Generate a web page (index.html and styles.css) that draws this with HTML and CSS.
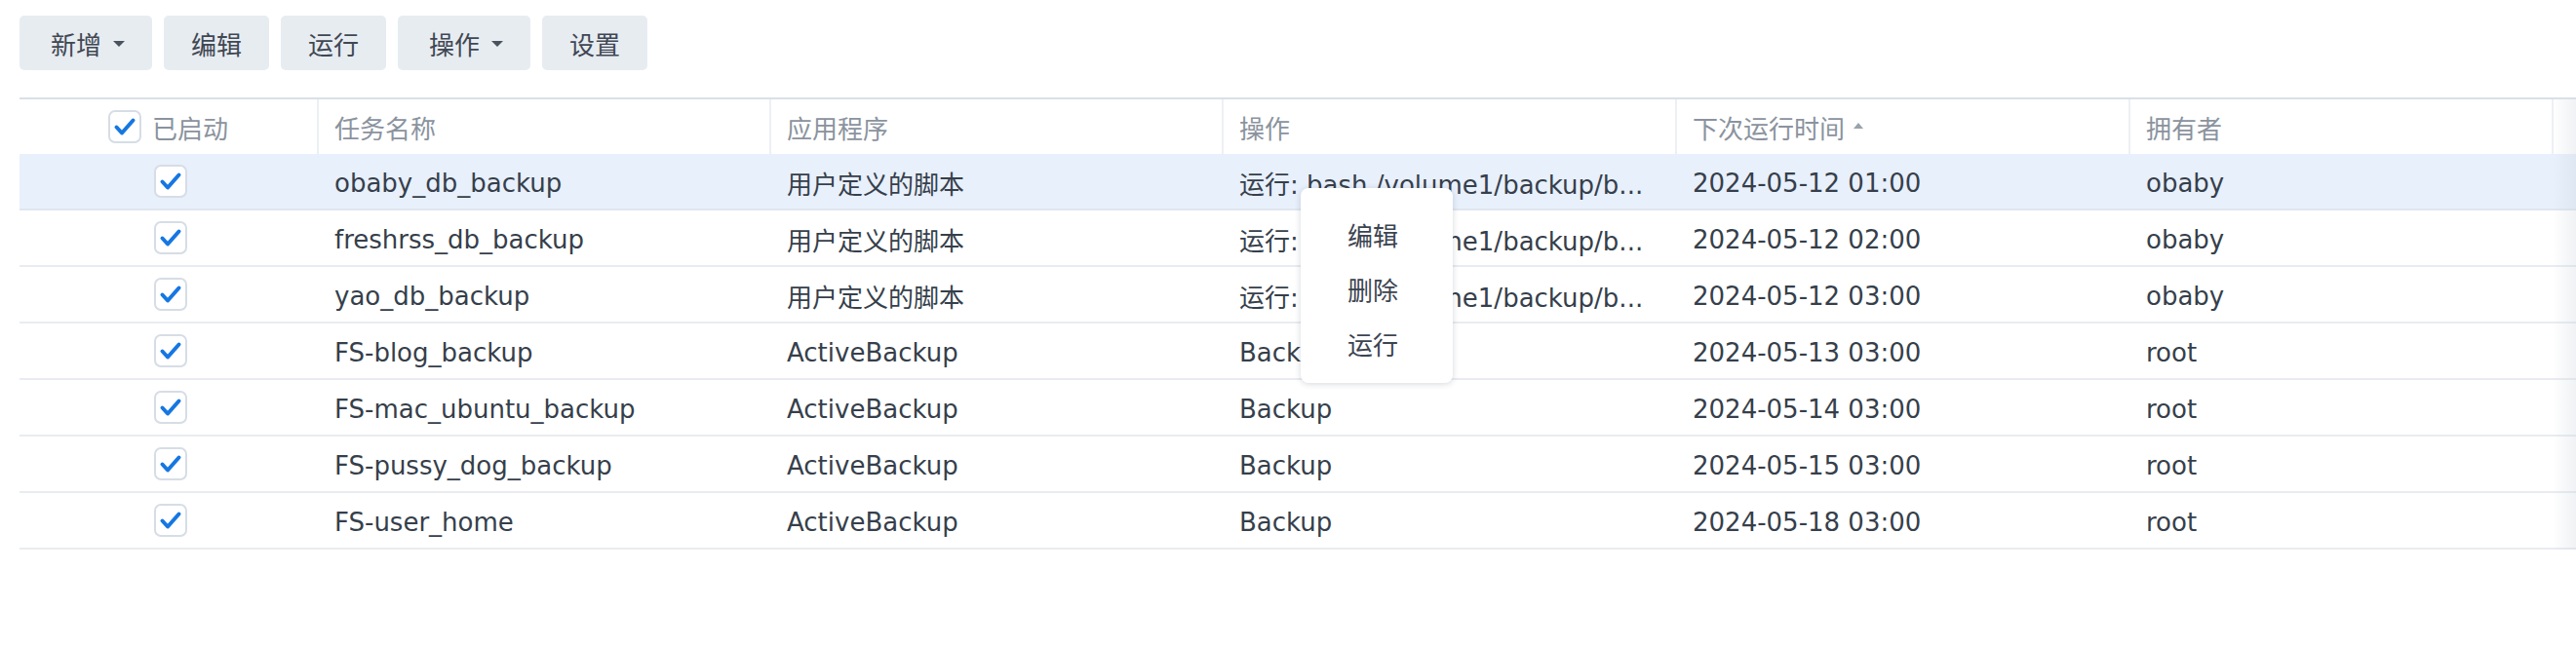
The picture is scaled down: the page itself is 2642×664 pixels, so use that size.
FILE: index.html
```html
<!DOCTYPE html>
<html lang="zh-CN">
<head>
<meta charset="utf-8">
<title>任务计划</title>
<link rel="stylesheet" href="styles.css">
</head>
<body>
<div class="page">
  <div class="toolbar">
    <button class="btn btn-wide">新增<span class="caret"></span></button>
    <button class="btn">编辑</button>
    <button class="btn">运行</button>
    <button class="btn btn-wide">操作<span class="caret"></span></button>
    <button class="btn">设置</button>
  </div>

  <div class="grid">
    <div class="row head">
      <div class="cell c-check"><span class="cb"><svg viewBox="0 0 34 34"><path d="M8.5 17.5 L14 23.5 L25.5 10.5"/></svg></span><span class="head-label">已启动</span></div>
      <div class="cell">任务名称</div>
      <div class="cell">应用程序</div>
      <div class="cell">操作</div>
      <div class="cell">下次运行时间<span class="sort"></span></div>
      <div class="cell">拥有者</div>
      <div class="cell last"></div>
    </div>

    <div class="row sel">
      <div class="cell c-check"><span class="cb"><svg viewBox="0 0 34 34"><path d="M8.5 17.5 L14 23.5 L25.5 10.5"/></svg></span></div>
      <div class="cell">obaby_db_backup</div>
      <div class="cell">用户定义的脚本</div>
      <div class="cell">运行: bash /volume1/backup/b...</div>
      <div class="cell">2024-05-12 01:00</div>
      <div class="cell">obaby</div>
      <div class="cell last"></div>
    </div>
    <div class="row">
      <div class="cell c-check"><span class="cb"><svg viewBox="0 0 34 34"><path d="M8.5 17.5 L14 23.5 L25.5 10.5"/></svg></span></div>
      <div class="cell">freshrss_db_backup</div>
      <div class="cell">用户定义的脚本</div>
      <div class="cell">运行: bash /volume1/backup/b...</div>
      <div class="cell">2024-05-12 02:00</div>
      <div class="cell">obaby</div>
      <div class="cell last"></div>
    </div>
    <div class="row">
      <div class="cell c-check"><span class="cb"><svg viewBox="0 0 34 34"><path d="M8.5 17.5 L14 23.5 L25.5 10.5"/></svg></span></div>
      <div class="cell">yao_db_backup</div>
      <div class="cell">用户定义的脚本</div>
      <div class="cell">运行: bash /volume1/backup/b...</div>
      <div class="cell">2024-05-12 03:00</div>
      <div class="cell">obaby</div>
      <div class="cell last"></div>
    </div>
    <div class="row">
      <div class="cell c-check"><span class="cb"><svg viewBox="0 0 34 34"><path d="M8.5 17.5 L14 23.5 L25.5 10.5"/></svg></span></div>
      <div class="cell">FS-blog_backup</div>
      <div class="cell">ActiveBackup</div>
      <div class="cell">Backup</div>
      <div class="cell">2024-05-13 03:00</div>
      <div class="cell">root</div>
      <div class="cell last"></div>
    </div>
    <div class="row">
      <div class="cell c-check"><span class="cb"><svg viewBox="0 0 34 34"><path d="M8.5 17.5 L14 23.5 L25.5 10.5"/></svg></span></div>
      <div class="cell">FS-mac_ubuntu_backup</div>
      <div class="cell">ActiveBackup</div>
      <div class="cell">Backup</div>
      <div class="cell">2024-05-14 03:00</div>
      <div class="cell">root</div>
      <div class="cell last"></div>
    </div>
    <div class="row">
      <div class="cell c-check"><span class="cb"><svg viewBox="0 0 34 34"><path d="M8.5 17.5 L14 23.5 L25.5 10.5"/></svg></span></div>
      <div class="cell">FS-pussy_dog_backup</div>
      <div class="cell">ActiveBackup</div>
      <div class="cell">Backup</div>
      <div class="cell">2024-05-15 03:00</div>
      <div class="cell">root</div>
      <div class="cell last"></div>
    </div>
    <div class="row">
      <div class="cell c-check"><span class="cb"><svg viewBox="0 0 34 34"><path d="M8.5 17.5 L14 23.5 L25.5 10.5"/></svg></span></div>
      <div class="cell">FS-user_home</div>
      <div class="cell">ActiveBackup</div>
      <div class="cell">Backup</div>
      <div class="cell">2024-05-18 03:00</div>
      <div class="cell">root</div>
      <div class="cell last"></div>
    </div>
    <div class="edge-shade"></div>
  </div>

  <div class="menu">
    <div class="menu-item">编辑</div>
    <div class="menu-item">删除</div>
    <div class="menu-item">运行</div>
  </div>
</div>
</body>
</html>
```

FILE: styles.css
```css
html, body {
  margin: 0;
  padding: 0;
  background: #ffffff;
}

body {
  font-family: "DejaVu Sans", "Noto Sans CJK SC", sans-serif;
  font-size: 26px;
  color: #363f4b;
  width: 2642px;
  height: 664px;
  overflow: hidden;
}

.page {
  position: relative;
  height: 664px;
}

.toolbar {
  display: flex;
  gap: 12px;
  padding: 16px 20px 0 20px;
  height: 56px;
}

.btn {
  height: 56px;
  width: 108px;
  border: none;
  border-radius: 5px;
  background: #e7ecf1;
  color: #3f4753;
  font-family: "Noto Sans CJK SC", "DejaVu Sans", sans-serif;
  font-size: 26px;
  display: flex;
  align-items: center;
  justify-content: center;
  gap: 12px;
  padding: 0;
}

.btn-wide {
  width: 136px;
  padding-left: 4px;
}

.caret {
  width: 0;
  height: 0;
  border-left: 6px solid transparent;
  border-right: 6px solid transparent;
  border-top: 6px solid #4a525d;
  margin-top: 2px;
}

.grid {
  position: relative;
  margin: 28px 0 0 20px;
  border-top: 2px solid #d9e0e8;
}

.row {
  display: grid;
  grid-template-columns: 307px 464px 464px 465px 465px 434px 1fr;
  height: 56px;
  border-bottom: 2px solid #e8ecf0;
}

.row.head {
  border-bottom: none;
  color: #8a939e;
}

.row.sel {
  background: #e8f0fc;
  border-bottom-color: #dfe6ee;
}

.cell {
  display: flex;
  align-items: center;
  padding: 3px 16px 0 16px;
  white-space: nowrap;
  overflow: hidden;
  min-width: 0;
}

.head .cell {
  border-right: 2px solid #edf0f3;
  font-family: "Noto Sans CJK SC", "DejaVu Sans", sans-serif;
  padding-top: 0;
}

.head .cell.last {
  border-right: none;
}

.cell.c-check {
  justify-content: center;
  gap: 11px;
  padding: 0;
}

.row:not(.head) .c-check {
  padding-left: 3px;
}

.cb {
  width: 34px;
  height: 34px;
  box-sizing: border-box;
  border: 2px solid #d6dde6;
  border-radius: 7px;
  background: #ffffff;
  display: flex;
  align-items: center;
  justify-content: center;
}

.cb svg {
  width: 34px;
  height: 34px;
  flex: none;
}

.cb path {
  fill: none;
  stroke: #1677e2;
  stroke-width: 4;
  stroke-linecap: round;
  stroke-linejoin: round;
}

.sort {
  width: 0;
  height: 0;
  border-left: 5px solid transparent;
  border-right: 5px solid transparent;
  border-bottom: 6px solid #9aa2ac;
  margin-left: 9px;
  margin-top: -2px;
}

.edge-shade {
  position: absolute;
  top: 0;
  right: 0;
  bottom: 0;
  width: 24px;
  background: linear-gradient(to right, rgba(200, 208, 218, 0), rgba(200, 208, 218, 0.28));
  pointer-events: none;
}

.menu {
  position: absolute;
  left: 1334px;
  top: 193px;
  width: 156px;
  box-sizing: border-box;
  padding: 19px 0 13px 0;
  background: #ffffff;
  border-radius: 8px;
  box-shadow: 0 1px 6px rgba(40, 55, 75, 0.2);
  font-family: "Noto Sans CJK SC", "DejaVu Sans", sans-serif;
}

.menu-item {
  height: 56px;
  display: flex;
  align-items: center;
  padding-left: 48px;
  color: #3b4451;
}
```
